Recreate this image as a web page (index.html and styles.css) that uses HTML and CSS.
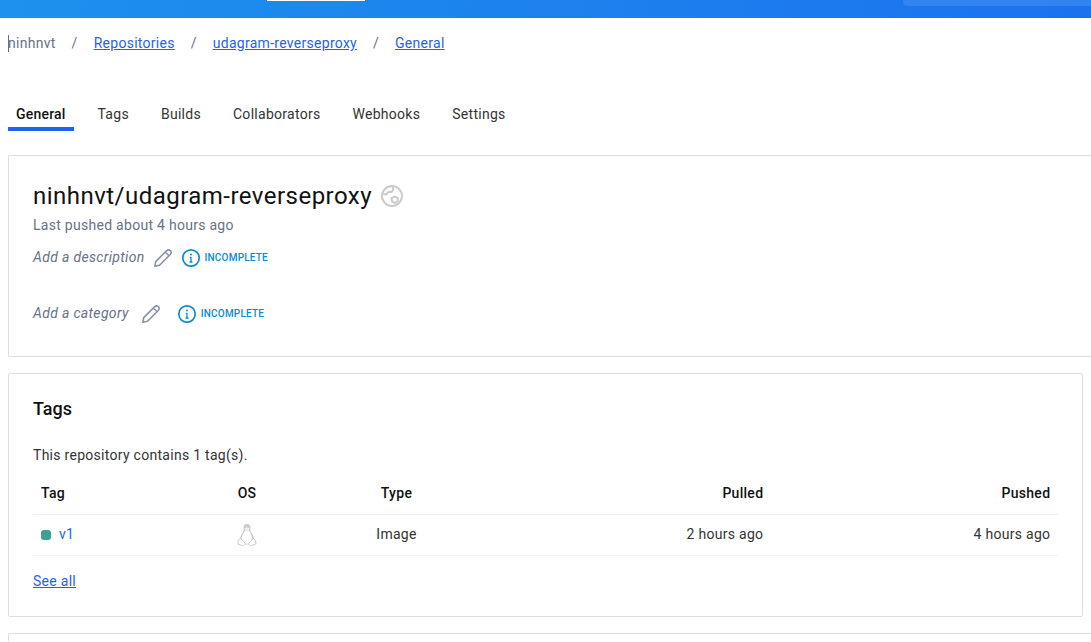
FILE: index.html
```html
<!DOCTYPE html>
<html lang="en">
<head>
<meta charset="utf-8">
<title>ninhnvt/udagram-reverseproxy</title>
<link rel="stylesheet" href="styles.css">
</head>
<body>
<svg class="defs" width="0" height="0">
  <symbol id="pencil" viewBox="0 0 20 20"><path d="M1.8 18.2 2.7 13.6 13.2 3.1Q15.4 .9 17.3 2.7T17 6.8L6.5 17.3 1.8 18.2ZM12.4 4l3.7 3.7" fill="none" stroke="#8993a5" stroke-width="1.6" stroke-linejoin="round"/></symbol>
  <symbol id="info" viewBox="0 0 20 20"><circle cx="10" cy="10" r="8.2" fill="none" stroke="#098cd4" stroke-width="1.7"/><path d="M10 9v5M8.7 9.4H10M8.5 14h3" stroke="#098cd4" stroke-width="1.3"/><circle cx="10" cy="6.6" r="1" fill="#098cd4"/></symbol>
</svg>
<header class="topbar"><div class="topbar-tab"></div><div class="topbar-search"></div></header>
<nav class="breadcrumb">
  <span class="owner">ninhnvt</span><span class="sep">/</span>
  <a href="#">Repositories</a><span class="sep">/</span>
  <a href="#">udagram-reverseproxy</a><span class="sep">/</span>
  <a href="#">General</a>
</nav>
<nav class="tabs">
  <span class="tab active">General</span><span class="tab">Tags</span><span class="tab">Builds</span><span class="tab">Collaborators</span><span class="tab">Webhooks</span><span class="tab">Settings</span>
</nav>
<section class="card wide summary">
  <div class="title-row">
    <h1>ninhnvt/udagram-reverseproxy</h1>
    <svg class="globe" viewBox="0 0 24 24" fill="none" stroke="#ccc" stroke-width="2"><circle cx="12" cy="12" r="10"/><path d="M2.5 9.5 6 10.7 8.5 8h3l1.7-2.1L12.4 2.3M11.5 14.2l3.4-1.6 2.8 1.4.1 3-2.6 1.9-2.9-.9Z"/></svg>
  </div>
  <p class="pushed">Last pushed about 4 hours ago</p>
  <div class="edit-row description"><em>Add a description</em><svg class="icon"><use href="#pencil"/></svg><svg class="icon info"><use href="#info"/></svg><span class="badge">INCOMPLETE</span></div>
  <div class="edit-row category"><em>Add a category</em><svg class="icon"><use href="#pencil"/></svg><svg class="icon info"><use href="#info"/></svg><span class="badge">INCOMPLETE</span></div>
</section>
<section class="card tags-card">
  <h2>Tags</h2>
  <p class="count">This repository contains 1 tag(s).</p>
  <div class="row head"><span>Tag</span><span class="center">OS</span><span class="center">Type</span><span class="right">Pulled</span><span class="right">Pushed</span></div>
  <div class="row body-row"><span class="tag"><i class="status"></i><span class="tag-name">v1</span></span><span class="center os"><svg class="linux" viewBox="0 0 20 24"><path d="M10 1C7.2 1 6.6 2.6 6.6 4.6v2.8C6.2 9.6 3.2 12 2.9 15.4L2.8 17l4.4 4.4h5.6l4.4-4.4-.1-1.6C16.8 12 13.8 9.6 13.4 7.4V4.6C13.4 2.6 12.8 1 10 1Z" fill="#ccc"/><path d="M8.1 7.8c-1 2.5-3.5 4.7-3.7 8.5L8 20.8h4l3-4.5c0-3.5-1.6-6-3-8.5Z" fill="#fff"/><path d="M3.4 15.7 6 17.6l2.2 3c0 1.5-1.2 2-2.5 2L1 21.4l.2-4ZM16.6 15.7 14 17.6l-2.2 3c0 1.5 1.2 2 2.5 2l4.7-1.8-.5-3.2Z" fill="#fff" stroke="#ccc"/><path d="M7.7 5.2 10 4.3l2.3.9-.5 2.5H8.3Z" fill="#eee"/></svg></span><span class="center">Image</span><span class="right">2 hours ago</span><span class="right">4 hours ago</span></div>
  <a class="see-all" href="#">See all</a>
</section>
<section class="card wide next"></section>
</body>
</html>
```
FILE: styles.css
```css
* { box-sizing: border-box; }
body { margin: 0; height: 642px; overflow: hidden; background: #fff; color: #333; font: 14px/20px Roboto, sans-serif; letter-spacing: .28px; }
h1, h2, p { margin: 0; }
a { color: #1f63e6; text-decoration: underline; }
.defs { display: block; position: absolute; }
.topbar { height: 18px; background: linear-gradient(100deg, #1d91ed, #1c72ee); display: flex; align-items: flex-start; }
.topbar-tab { width: 98px; height: 1px; margin-left: 267px; background: #fff; }
.topbar-search { flex: 1; height: 6px; margin-left: 538px; background: #3284f0; border-radius: 0 0 0 4px; }
.breadcrumb { display: flex; height: 50px; padding: 15px 8px; }
.owner { color: #677285; border-left: 1px solid #677285; height: 17px; margin-top: 2px; line-height: 16px; text-indent: -1px; }
.sep { width: 38px; text-align: center; color: #677285; }
.tabs { display: flex; gap: 16px; height: 63px; margin: 0 8px; padding-top: 36px; }
.tab { height: 27px; padding: 0 8px; }
.active { width: 65.5px; color: #111; font-weight: 500; border-bottom: 4px solid #1d63ed; letter-spacing: .2px; }
.card { margin: 0 8px 16px; border: 1px solid #ddd; border-radius: 2px; padding: 0 24px; }
.wide { margin-right: 0; border-right: 0; border-radius: 2px 0 0 2px; }
.summary { height: 202px; margin-top: 24px; }
.title-row { display: flex; align-items: center; height: 32px; margin-top: 24px; gap: 8px; }
h1 { color: #111; font-size: 24px; font-weight: 400; line-height: 32px; letter-spacing: .47px; }
.globe { width: 24px; height: 24px; }
.pushed { color: #677285; margin-top: 3px; }
.edit-row { display: flex; align-items: flex-start; height: 20px; color: #677285; letter-spacing: .33px; }
.description { margin-top: 12px; }
.category { margin-top: 36px; }
.icon { width: 20px; height: 20px; margin: 1px 0 0 8px; }
.category .icon:not(.info) { margin-left: 12px; }
.category .info { margin-left: 16px; }
.badge { margin: 1px 0 0 4px; color: #098cd4; font-size: 10px; font-weight: 500; letter-spacing: .2px; }
.tags-card { height: 244px; }
h2 { margin-top: 23px; color: #111; font-size: 18px; font-weight: 500; line-height: 24px; letter-spacing: 0; }
.count { margin-top: 24px; }
.row { display: grid; grid-template-columns: 139px 150px 149px 300px 287px; align-items: center; width: 1025px; height: 41px; border-bottom: 1px solid #f0f0f0; }
.head { height: 43px; margin-top: 7px; padding-bottom: 1px; color: #111; font-weight: 500; }
.body-row { padding-bottom: 2px; }
.row > :first-child { padding-left: 8px; }
.center { text-align: center; }
.right { text-align: right; padding-right: 7.7px; }
.tag { display: flex; align-items: center; gap: 8px; color: #1f63e6; }
.status { width: 10px; height: 10px; margin-top: 2px; border-radius: 3px; background: #3da291; }
.os { display: flex; justify-content: center; }
.linux { width: 20px; height: 24px; margin-top: 2px; }
.see-all { display: inline-block; margin-top: 15px; }
.next { height: 9px; margin-bottom: 0; border-bottom: 0; }
```
